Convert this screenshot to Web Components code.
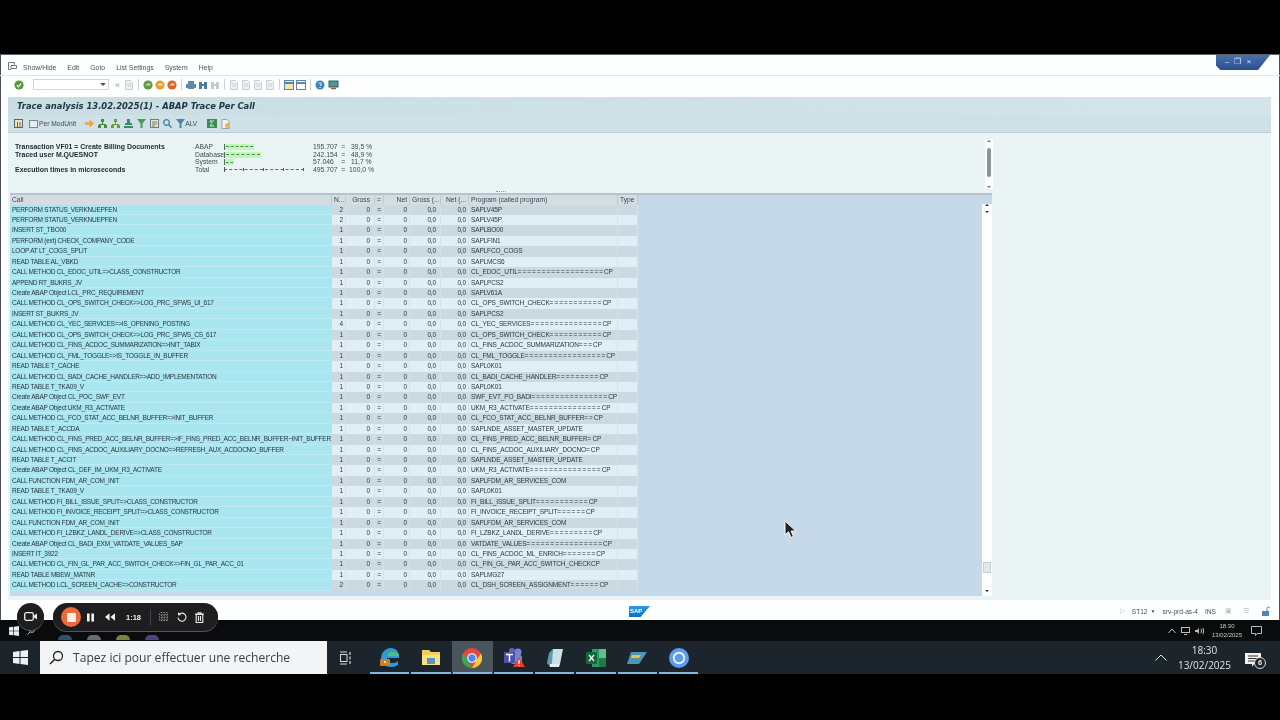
<!DOCTYPE html>
<html lang="fr">
<head>
<meta charset="utf-8">
<title>Trace analysis</title>
<style>
  html, body { margin: 0; height: 720px; overflow: hidden; background: #000; }
  body { display: flex; flex-direction: column; font-family: "Liberation Sans", sans-serif; position: relative; filter: blur(.3px); }
</style>
</head>
<body>
<sap-window>
  <sap-menubar></sap-menubar>
  <sap-toolbar></sap-toolbar>
  <sap-panel>
    <trace-header></trace-header>
    <trace-table></trace-table>
  </sap-panel>
  <sap-status></sap-status>
</sap-window>
<win-strip></win-strip>
<win-taskbar></win-taskbar>
<rec-bar></rec-bar>
<mouse-cursor></mouse-cursor>

<script>
const define = (name, html) => {
  customElements.define(name, class extends HTMLElement {
    constructor() {
      super()
      this.attachShadow({ mode: 'open' })
      this.shadowRoot.innerHTML = typeof html === 'function' ? html() : html
    }
  })
}

const sep = (x) => `<i style="width:1px;height:11px;background:#c9d2d6;margin:0 ${x}px 0 ${x - 2}px"></i>`

const ball = (c) => `<svg width="10" height="10" viewBox="0 0 10 10"><circle cx="5" cy="5" r="4.6" fill="${c}"/><path d="M2.6 5.4 4 3.6h3.4v1.8H4.6z" fill="#fff" opacity=".65"/></svg>`

const page = (c = '#c6d0d4') => `<svg width="10" height="10" viewBox="0 0 10 10"><path d="M1.500 .5h5l2 2v7h-7z" fill="#eef2f3" stroke="${c}"/><path d="M3 4h4M3 6h4" stroke="${c}"/></svg>`

define('sap-window', `
  <style>
    :host { display: flex; flex-direction: column; height: 566px; margin-top: 54px; background: #fdfefe; border-top: 1px solid #5a6166; box-sizing: border-box; position: relative; box-shadow: inset 1px 0 0 #4a5055, inset -1px 0 0 #4a5055; }
    .ctl { position: absolute; top: 0; right: 10px; width: 54px; height: 15px; background: linear-gradient(#4a6fae, #2c4f8f); clip-path: polygon(0 0, 100% 0, 78% 100%, 8% 100%, 0 70%); color: #dfe8f4; font: 8px/13px "Liberation Sans", sans-serif; display: flex; gap: 5px; padding-left: 9px; box-sizing: border-box; }
  </style>
  <slot></slot>
  <div class="ctl"><span>–</span><span>❐</span><span>×</span></div>
`)

define('sap-menubar', `
  <style>
    :host { display: flex; align-items: center; height: 21px; padding: 5px 0 0 8px; box-sizing: border-box; border-bottom: 1px solid #dfe7ea; color: #46545d; font: 6.900px "Liberation Sans", sans-serif; }
    span { margin-right: 11px; }
    svg { margin-right: 6px; margin-top: -3px; }
  </style>
  <svg width="9" height="9" viewBox="0 0 9 9"><path d="M.5 7.500v-7h6v2M3 3.500h5.500v3H3zM.5 7.500H3" fill="none" stroke="#6d7b84"/></svg>
  <span>Show/Hide</span><span>Edit</span><span>Goto</span><span>List Settings</span><span>System</span><span>Help</span>
`)

define('sap-toolbar', () => `
  <style>
    :host { display: flex; align-items: center; height: 17px; padding-left: 14px; box-sizing: border-box; }
    .cmd { width: 76px; height: 11px; border: 1px solid #cfd8dc; background: #fff; margin: 0 6px 0 7px; position: relative; box-sizing: border-box; }
    .cmd::after { content: ""; position: absolute; right: 2px; top: 3px; border: 3px solid transparent; border-top-color: #555; }
    .g { color: #8d999f; font: 9px "Liberation Sans", sans-serif; margin-right: 4px; }
    svg { margin-right: 2px; flex: none; }
    i { flex: none; }
  </style>
  <svg width="10" height="10" viewBox="0 0 10 10"><circle cx="5" cy="5" r="4.600" fill="#4f9a3a"/><path d="M2.800 5 4.400 6.800 7.200 3.400" fill="none" stroke="#fff" stroke-width="1.200"/></svg>
  <div class="cmd"></div>
  <span class="g">«</span>
  ${page()}${sep(4)}
  ${ball('#5f9c3c')}${ball('#e2a32d')}${ball('#d7662a')}${sep(4)}
  <svg width="10" height="10" viewBox="0 0 10 10"><path d="M2 1h6v3H2zM0 4h10v4H0zM2 7h6v2H2z" fill="#5d8aa8"/></svg>
  <svg width="10" height="10" viewBox="0 0 10 10"><path d="M1 2h3v7H1zM6 2h3v7H6zM4 4h2v2H4z" fill="#4b7da0"/></svg>
  <svg width="10" height="10" viewBox="0 0 10 10"><path d="M1 2h3v7H1zM6 2h3v7H6zM4 4h2v2H4z" fill="#c3ccd0"/></svg>
  ${sep(4)}${page()}${page()}${page()}${page()}${sep(4)}
  <svg width="10" height="10" viewBox="0 0 10 10"><rect x=".5" y=".5" width="9" height="9" fill="#f6e3b0" stroke="#5b86a8"/><path d="M1 3h8" stroke="#5b86a8" stroke-width="2"/></svg>
  <svg width="10" height="10" viewBox="0 0 10 10"><rect x=".5" y=".5" width="9" height="9" fill="#fff" stroke="#5b86a8"/><path d="M1 3h8" stroke="#5b86a8" stroke-width="2"/></svg>
  ${sep(4)}
  <svg width="10" height="10" viewBox="0 0 10 10" style="margin-right:3px"><circle cx="5" cy="5" r="4.500" fill="#3f86bd"/><path d="M3.800 3.600a1.300 1.200 0 1 1 1.600 1.500V6M5 7v1" stroke="#fff" fill="none"/></svg>
  <svg width="11" height="10" viewBox="0 0 11 10"><rect x="1" y="1" width="9" height="6" fill="#4a9a86" stroke="#2f5f80"/><path d="M3 8.500h5" stroke="#c44b37" stroke-width="1.500"/></svg>
`)

define('sap-panel', `
  <style>
    :host { display: block; flex: 1; min-height: 0; margin: 4px 9px 0 8px; background: #ebf4f4; }
    .title { height: 18px; background: linear-gradient(90deg, #c9dde3, #d3e4ea); padding-left: 9px; font: italic bold 8.400px/18px "DejaVu Sans", sans-serif; color: #233640; }
    .tools { height: 18px; background: #cfe0e6; border-bottom: 1px solid #bccdd4; display: flex; align-items: center; padding-left: 6px; font: 6.700px "Liberation Sans", sans-serif; color: #3e4c54; box-sizing: border-box; }
    .tools svg { margin-right: 4px; flex: none; }
    .tools span { margin-right: 10px; }
    .body { padding: 6px 0 0 2px; }
  </style>
  <div class="title">Trace analysis 13.02.2025(1) - ABAP Trace Per Call</div>
  <div class="tools">
    <svg width="9" height="9" viewBox="0 0 9 9"><rect x=".5" y=".5" width="8" height="8" fill="#f2e3b4" stroke="#58666d"/><path d="M3.500 3v5M6 3v5" stroke="#58666d"/></svg>
    <svg width="9" height="8" viewBox="0 0 9 8" style="margin:0 1px 0 2px"><rect x=".5" y=".5" width="8" height="7" fill="#e4edf0" stroke="#78868d"/></svg>
    <span style="margin-right:9px">Per ModUnit</span>
    <svg width="9" height="9" viewBox="0 0 10 9"><path d="M0 3h5V0l5 4.500L5 9V6H0z" fill="#e8a63c"/></svg>
    <svg width="9" height="9" viewBox="0 0 9 9"><path d="M3 0h3v3H3zM0 6h3v3H0zM6 6h3v3H6zM1 5h7v1H1zM4 3h1v2H4z" fill="#4f8a3c"/></svg>
    <svg width="9" height="9" viewBox="0 0 9 9"><path d="M3 0h3v3H3zM0 6h3v3H0zM6 6h3v3H6zM1 5h7v1H1zM4 3h1v2H4z" fill="#6c9a3d"/></svg>
    <svg width="9" height="9" viewBox="0 0 9 9"><path d="M3 0h3v4h2v2H1V4h2zM0 7h9v2H0z" fill="#3c8b6d"/></svg>
    <svg width="9" height="9" viewBox="0 0 9 9"><path d="M0 0h9L5.500 4.500V9h-2V4.500z" fill="#4b9a55"/></svg>
    <svg width="9" height="9" viewBox="0 0 9 9"><rect x=".5" y=".5" width="8" height="8" fill="#f2e3b4" stroke="#66808c"/><path d="M2 3h5M2 5h5M2 7h3" stroke="#66808c"/></svg>
    <svg width="9" height="9" viewBox="0 0 9 9"><circle cx="3.500" cy="3.500" r="2.800" fill="none" stroke="#3f7fa8" stroke-width="1.200"/><path d="m5.500 5.500 3 3" stroke="#3f7fa8" stroke-width="1.500"/></svg>
    <svg width="9" height="9" viewBox="0 0 9 9" style="margin-right:0"><path d="M0 0h9L5.500 4.500V9h-2V4.500z" fill="#4a83b0"/></svg>
    <span style="margin-right:10px">ALV</span>
    <svg width="10" height="9" viewBox="0 0 10 9"><rect width="10" height="9" fill="#3e8a55"/><path d="M3 2h4M3 2l2 2.500L3 7h4" stroke="#d6ecd8" fill="none"/></svg>
    <svg width="10" height="10" viewBox="0 0 10 10"><path d="M1 .5h5l2 2v7H1z" fill="#f4f4ee" stroke="#98a4a8"/><circle cx="6.500" cy="6.500" r="2.500" fill="#e8b54a"/></svg>
  </div>
  <div class="body"><slot></slot></div>
`)

define('trace-header', `
  <style>
    :host { display: grid; grid-template-columns: 180px 29px 89px 1fr 8px; height: 50px; padding: 4px 0 0 5px; width: 983px; box-sizing: border-box; font: 6.800px/7.700px "Liberation Sans", sans-serif; color: #3d4a52; position: relative; }
    .l { font-weight: bold; color: #222c33; font-size: 6.950px; }
    .blank { height: 7.700px; }
    .b { height: 7.700px; display: flex; align-items: center; }
    .b u { display: block; height: 6px; background: #bff7b8; border-left: 1px solid #5a6b60; position: relative; }
    .b u::after { content: ""; position: absolute; left: 1px; right: 1px; top: 2.500px; border-top: 1px dashed #4a8a52; }
    .t { width: 80px; height: 1px; border-top: 1px dashed #666; position: relative; }
    .t::before { content: ""; position: absolute; left: 0; top: -3px; height: 5px; border-left: 1px solid #555; }
    .t i { position: absolute; top: -2px; height: 3px; border-left: 1px solid #555; }
    pre { margin: 0; font: inherit; }
    .bar { position: absolute; right: 0; top: 0; width: 8px; height: 50px; background: #fbfdfd; }
    .bar b { position: absolute; left: 2px; top: 9px; width: 4px; height: 29px; background: #8b9499; border-radius: 2px; }
    .bar i { position: absolute; left: 1.500px; border: 2.500px solid transparent; }
    .grip { position: absolute; left: 486px; bottom: -3px; width: 10px; border-top: 1px dotted #8b9aa2; }
  </style>
  <div class="l">Transaction VF01 = Create Billing Documents<br>Traced user M.QUESNOT<div class="blank"></div>Execution times in microseconds</div>
  <div>ABAP<br>Database<br>System<br>Total</div>
  <div>
    <div class="b"><u style="width:29px"></u></div>
    <div class="b"><u style="width:36px"></u></div>
    <div class="b"><u style="width:9px"></u></div>
    <div class="b"><div class="t"><i style="left:19px"></i><i style="left:39px"></i><i style="left:59px"></i><i style="left:79px"></i></div></div>
  </div>
  <pre>195.707  =   39,5 %
242.154  =   48,9 %
57.046    =   11,7 %
495.707  =  100,0 %</pre>
  <div class="bar"><i style="top:-1px;border-bottom-color:#777"></i><b></b><i style="bottom:-1px;border-top-color:#777"></i></div>
  <div class="grip"></div>
`)

const ROWS = [
  ['PERFORM STATUS_VERKNUEPFEN', 2, 'SAPLV45P'],
  ['PERFORM STATUS_VERKNUEPFEN', 2, 'SAPLV45P'],
  ['INSERT ST_TBO00', 1, 'SAPLBO00'],
  ['PERFORM (ext) CHECK_COMPANY_CODE', 1, 'SAPLFIN1'],
  ['LOOP AT LT_COGS_SPLIT', 1, 'SAPLFCO_COGS'],
  ['READ TABLE AL_VBKD', 1, 'SAPLMCS6'],
  ['CALL METHOD CL_EDOC_UTIL=>CLASS_CONSTRUCTOR', 1, 'CL_EDOC_UTIL==================CP'],
  ['APPEND RT_BUKRS_JV', 1, 'SAPLPCS2'],
  ['Create ABAP Object LCL_PRC_REQUIREMENT', 1, 'SAPLV61A'],
  ['CALL METHOD CL_OPS_SWITCH_CHECK=>LOG_PRC_SFWS_UI_617', 1, 'CL_OPS_SWITCH_CHECK===========CP'],
  ['INSERT ST_BUKRS_JV', 1, 'SAPLPCS2'],
  ['CALL METHOD CL_YEC_SERVICES=>IS_OPENING_POSTING', 4, 'CL_YEC_SERVICES===============CP'],
  ['CALL METHOD CL_OPS_SWITCH_CHECK=>LOG_PRC_SFWS_CS_617', 1, 'CL_OPS_SWITCH_CHECK===========CP'],
  ['CALL METHOD CL_FINS_ACDOC_SUMMARIZATION=>INIT_TABIX', 1, 'CL_FINS_ACDOC_SUMMARIZATION===CP'],
  ['CALL METHOD CL_FML_TOGGLE=>IS_TOGGLE_IN_BUFFER', 1, 'CL_FML_TOGGLE=================CP'],
  ['READ TABLE T_CACHE', 1, 'SAPL0K01'],
  ['CALL METHOD CL_BADI_CACHE_HANDLER=>ADD_IMPLEMENTATION', 1, 'CL_BADI_CACHE_HANDLER=========CP'],
  ['READ TABLE T_TKA09_V', 1, 'SAPL0K01'],
  ['Create ABAP Object CL_POC_SWF_EVT', 1, 'SWF_EVT_PO_BADI================CP'],
  ['Create ABAP Object UKM_R3_ACTIVATE', 1, 'UKM_R3_ACTIVATE===============CP'],
  ['CALL METHOD CL_FCO_STAT_ACC_BELNR_BUFFER=>INIT_BUFFER', 1, 'CL_FCO_STAT_ACC_BELNR_BUFFER==CP'],
  ['READ TABLE T_ACCDA', 1, 'SAPLNDE_ASSET_MASTER_UPDATE'],
  ['CALL METHOD CL_FINS_PRED_ACC_BELNR_BUFFER=>IF_FINS_PRED_ACC_BELNR_BUFFER~INIT_BUFFER', 1, 'CL_FINS_PRED_ACC_BELNR_BUFFER=CP'],
  ['CALL METHOD CL_FINS_ACDOC_AUXILIARY_DOCNO=>REFRESH_AUX_ACDOCNO_BUFFER', 1, 'CL_FINS_ACDOC_AUXILIARY_DOCNO=CP'],
  ['READ TABLE T_ACCIT', 1, 'SAPLNDE_ASSET_MASTER_UPDATE'],
  ['Create ABAP Object CL_DEF_IM_UKM_R3_ACTIVATE', 1, 'UKM_R3_ACTIVATE===============CP'],
  ['CALL FUNCTION FDM_AR_COM_INIT', 1, 'SAPLFDM_AR_SERVICES_COM'],
  ['READ TABLE T_TKA09_V', 1, 'SAPL0K01'],
  ['CALL METHOD FI_BILL_ISSUE_SPLIT=>CLASS_CONSTRUCTOR', 1, 'FI_BILL_ISSUE_SPLIT===========CP'],
  ['CALL METHOD FI_INVOICE_RECEIPT_SPLIT=>CLASS_CONSTRUCTOR', 1, 'FI_INVOICE_RECEIPT_SPLIT======CP'],
  ['CALL FUNCTION FDM_AR_COM_INIT', 1, 'SAPLFDM_AR_SERVICES_COM'],
  ['CALL METHOD FI_LZBKZ_LANDL_DERIVE=>CLASS_CONSTRUCTOR', 1, 'FI_LZBKZ_LANDL_DERIVE=========CP'],
  ['Create ABAP Object CL_BADI_EXM_VATDATE_VALUES_SAP', 1, 'VATDATE_VALUES================CP'],
  ['INSERT IT_3922', 1, 'CL_FINS_ACDOC_ML_ENRICH=======CP'],
  ['CALL METHOD CL_FIN_GL_PAR_ACC_SWITCH_CHECK=>FIN_GL_PAR_ACC_01', 1, 'CL_FIN_GL_PAR_ACC_SWITCH_CHECKCP'],
  ['READ TABLE MBEW_MATNR', 1, 'SAPLMG27'],
  ['CALL METHOD LCL_SCREEN_CACHE=>CONSTRUCTOR', 2, 'CL_DSH_SCREEN_ASSIGNMENT======CP'],
]

const esc = (s) => s.replace(/&/g, '&amp;').replace(/</g, '&lt;').replace(/>/g, '&gt;')
// the "=" padding runs are wider in the SAP font than in ours
const pad = (s) => esc(s).replace(/=+/g, (m) => `<span class="eq">${m}</span>`)

define('trace-table', () => `
  <style>
    :host { display: block; width: 982px; height: 403px; margin-top: 4px; background: #c5d9e8; border-top: 2px solid #b3c4cf; box-sizing: border-box; font: 6.500px/10.440px "Liberation Sans", sans-serif; letter-spacing: -.14px; color: #2a3740; position: relative; }
    .grid { display: grid; grid-template-columns: 322px 14px 29px 9px 26px 31px 28px 149px 20px; grid-template-rows: 9.500px; grid-auto-rows: 10.440px; width: max-content; }
    .grid > div { overflow: hidden; white-space: nowrap; padding: 0 2px; box-sizing: border-box; border-right: 1px solid #d5e2ea; }
    .grid > .hd { background: #d3dde2; color: #3b474e; font-size: 6.700px; line-height: 9.500px; letter-spacing: 0; border-right-color: #bfcbd2; }
    .grid > .lim { padding: 0 4px 0 2px; }
    .r { text-align: right; }
    .c { text-align: center; }
    .call { background: #a9e6ef; }
    .o { background: #cdd9e2; }
    .e { background: #e1eef6; }
    .grid > .call { border-bottom: 1px solid #bdeaf0; border-right: 0; padding-right: 0; letter-spacing: -.25px; }
    .eq { letter-spacing: 1px; }
    .sb { position: absolute; right: 0; top: 9px; width: 10px; height: 392px; background: #fbfdfe; }
    .sb i { position: absolute; left: 2.500px; border: 2.500px solid transparent; }
    .sb b { position: absolute; left: 1px; top: 358px; width: 8px; height: 11px; background: #dfe9ee; border: 1px solid #c3d0d6; box-sizing: border-box; }
  </style>
  <div class="grid">
    <div class="hd">Call</div><div class="hd">N...</div><div class="hd r lim">Gross</div><div class="hd c">=</div><div class="hd r">Net</div><div class="hd r">Gross (...</div><div class="hd r">Net (...</div><div class="hd">Program (called program)</div><div class="hd">Type</div>
    ${ROWS.map(([call, n, prog], i) => {
      const k = i % 2 ? 'e' : 'o'
      return `<div class="call">${esc(call)}</div><div class="${k} r">${n}</div><div class="${k} r lim">0</div><div class="${k} c">=</div><div class="${k} r">0</div><div class="${k} r lim">0,0</div><div class="${k} r">0,0</div><div class="${k}">${pad(prog)}</div><div class="${k}"></div>`
    }).join('')}
  </div>
  <div class="sb">
    <i style="top:-2px;border-bottom-color:#333"></i>
    <i style="top:7px;border-top-color:#333"></i>
    <b></b>
    <i style="bottom:2px;border-top-color:#333"></i>
  </div>
`)

define('sap-status', `
  <style>
    :host { display: flex; align-items: center; justify-content: flex-end; height: 20px; padding: 2px 10px 0 0; box-sizing: border-box; font: 6.600px "Liberation Sans", sans-serif; color: #46535b; position: relative; }
    .logo { position: absolute; left: 629px; top: 6px; width: 21px; height: 11px; background: linear-gradient(#2a9be0, #0a6fc0); clip-path: polygon(0 0, 100% 0, 55% 100%, 0 100%); color: #fff; font: bold 6px/11px "Liberation Sans", sans-serif; padding-left: 1px; box-sizing: border-box; }
    span { margin-left: 7px; }
    .m { color: #b8c2c8; }
  </style>
  <div class="logo">SAP</div>
  <span class="m">▷</span><span>ST12</span><span style="font-size:5px;margin-left:3px">▼</span><span>srv-prd-as-4</span><span>INS</span>
  <span class="m" style="margin-left:9px">▣</span><span class="m" style="margin-left:11px">☰</span>
  <svg width="9" height="10" viewBox="0 0 9 10" style="margin-left:12px"><path d="M1 5h7v5H1z" fill="#4a88b5"/><path d="M6 5V2.500a1.500 1.500 0 0 1 3 0" fill="none" stroke="#4a88b5"/></svg>
`)

define('win-strip', `
  <style>
    :host { display: flex; align-items: center; height: 21px; background: #0a0b0c; color: #ccc; font: 6px "Liberation Sans", sans-serif; padding-left: 9px; box-sizing: border-box; flex: none; position: relative; }
    .right { margin-left: auto; display: flex; align-items: center; padding-right: 13px; }
    .right svg { margin-right: 5px; }
    .d { text-align: center; line-height: 9px; margin: 0 9px 0 3px; }
    .ghost { position: absolute; left: 0; right: 0; bottom: 1px; display: flex; padding-left: 58px; gap: 15px; opacity: .7; }
    .ghost i { width: 14px; height: 5px; border-radius: 5px 5px 0 0; }
  </style>
  <svg width="10" height="10" viewBox="0 0 11 11"><path d="M0 1.500 4.800.8v4.300H0zM5.500.7 11 0v5.100H5.500zM0 5.800h4.800v4.400L0 9.500zM5.500 5.800H11V11l-5.500-.8z" fill="#e7edf2"/></svg>
  <svg width="8" height="8" viewBox="0 0 8 8" style="margin-left:8px"><circle cx="5" cy="3" r="2.400" fill="none" stroke="#bbb"/><path d="M3 5 .8 7.500" stroke="#bbb"/></svg>
  <div class="ghost"><i style="background:#3d6f9c"></i><i style="background:#8d9aa0"></i><i style="background:#b3b25a"></i><i style="background:#6a5ca8"></i></div>
  <div class="right">
    <svg width="8" height="6" viewBox="0 0 8 6"><path d="m.5 5 3.500-4 3.500 4" fill="none" stroke="#bbb"/></svg>
    <svg width="9" height="8" viewBox="0 0 9 8"><rect x=".5" y=".5" width="8" height="5" fill="none" stroke="#bbb"/><path d="M3 7.500h3" stroke="#bbb"/></svg>
    <svg width="9" height="8" viewBox="0 0 9 8"><path d="M0 3h2l2-2v6L2 5H0z" fill="#bbb"/><path d="M6 2q1 2 0 4M8 1q1.200 3 0 6" fill="none" stroke="#bbb"/></svg>
    <div class="d">18:30<br>13/02/2025</div>
    <svg width="11" height="10" viewBox="0 0 11 10"><path d="M.5.5h10v7H6L4.500 9.500V7.500h-4z" fill="none" stroke="#bbb"/></svg>
  </div>
`)

const tab = (inner, cls = '') => `<div class="tab ${cls}">${inner}</div>`

define('win-taskbar', () => `
  <style>
    :host { display: flex; align-items: stretch; height: 33px; background: #1c252b; color: #e4e8ea; flex: none; font-family: "Open Sans", "Liberation Sans", sans-serif; position: relative; }
    .start { width: 40px; display: flex; align-items: center; justify-content: center; }
    .search { width: 287px; background: #f3f4f5; display: flex; align-items: center; color: #3a3f44; font-size: 12.100px; padding-left: 9px; gap: 9px; box-sizing: border-box; }
    .tv { width: 38px; display: flex; align-items: center; justify-content: center; }
    .tabs { display: flex; margin-left: 4px; }
    .tab { width: 41.300px; display: flex; align-items: center; justify-content: center; position: relative; }
    .tab.on::after { content: ""; position: absolute; left: 1px; right: 1px; bottom: 0; height: 2px; background: #7fb7e0; }
    .tab.act { background: #4a545c; }
    .tray { margin-left: auto; display: flex; align-items: center; }
    .clock { text-align: center; font-size: 10px; line-height: 15px; margin: 0 14px 0 11px; color: #dfe4e6; }
    .note { position: relative; width: 16px; height: 16px; margin-right: 19px; }
    .note b { position: absolute; right: -5px; bottom: -3px; width: 12px; height: 12px; border-radius: 50%; background: #1c252b; border: 1px solid #ddd; box-sizing: border-box; font: bold 7.500px/10px "Liberation Sans", sans-serif; text-align: center; }
  </style>
  <div class="start"><svg width="15" height="15" viewBox="0 0 15 15"><path d="M0 2.100 6.500 1.100v5.900H0zM7.500 1 15 0v7H7.500zM0 8h6.500v5.900L0 12.900zM7.500 8H15v7l-7.500-1z" fill="#eef2f5"/></svg></div>
  <div class="search">
    <svg width="15" height="15" viewBox="0 0 15 15"><circle cx="9" cy="6" r="4.500" fill="none" stroke="#222" stroke-width="1.300"/><path d="M5.800 9.200 1 14" stroke="#222" stroke-width="1.500"/></svg>
    <span>Tapez ici pour effectuer une recherche</span>
  </div>
  <div class="tv"><svg width="14" height="14" viewBox="0 0 14 14"><path d="M1 1h7M1 13h7" stroke="#d5dadd"/><rect x="1.500" y="3.500" width="6.500" height="7" fill="none" stroke="#d5dadd"/><path d="M11 1v3M11 5.500v3M11 10v3" stroke="#d5dadd" stroke-width="1.200"/></svg></div>
  <div class="tabs">
    ${tab(`<svg width="21" height="21" viewBox="0 0 21 21"><path d="M2 12C2 5 7 1 12 1c5 0 8 4 8 8v2H8c0 3 3 5 6 5 2 0 4-1 5-2v4c-2 1-4 2-7 2-6 0-10-4-10-8z" fill="#2d9ad6"/><path d="M20 9H9c0-3 2-4 4-4 3 0 7 1 7 4z" fill="#55c26b"/><rect x="1" y="12" width="10" height="7" rx="1" fill="#c97f2c"/><rect x="5" y="14" width="2" height="2" fill="#f4dba0"/></svg>`, 'on')}
    ${tab(`<svg width="20" height="17" viewBox="0 0 20 17"><path d="M1 1h7l2 2h9v13H1z" fill="#f3ce5f"/><path d="M1 6h18v10H1z" fill="#f8e08a"/><rect x="6" y="9" width="8" height="6" fill="#5c94c0"/></svg>`, 'on')}
    ${tab(`<svg width="20" height="20" viewBox="0 0 20 20"><circle cx="10" cy="10" r="10" fill="#e2483b"/><path d="M10 20a10 10 0 0 1-8.700-15L6 13l4 7z" fill="#3aa757"/><path d="M19 5.500a10 10 0 0 1-9 14.500l4.500-8z" fill="#fbcb37"/><circle cx="10" cy="10" r="4.800" fill="#fff"/><circle cx="10" cy="10" r="3.700" fill="#4a8af0"/></svg>`, 'on act')}
    ${tab(`<svg width="22" height="21" viewBox="0 0 22 21"><circle cx="15" cy="5" r="3.500" fill="#7b83d8"/><circle cx="9" cy="4" r="3" fill="#5b63bd"/><rect x="8" y="8" width="11" height="9" rx="2" fill="#7b83d8"/><rect x="1" y="5" width="11" height="11" fill="#4b53a8"/><path d="M3 7.500h7M6.500 7.500v7" stroke="#fff" stroke-width="1.500"/><path d="m16 10 6 10H10z" fill="#e4412b"/><path d="M16 13v4M16 18v1" stroke="#fff" stroke-width="1.200"/></svg>`, 'on')}
    ${tab(`<svg width="18" height="20" viewBox="0 0 18 20"><path d="M7 1h10l-3 15H4z" fill="#c8e2ea"/><path d="M7 1 3 5 1 15l3 4 2-4z" fill="#5f9bb0"/><path d="M4 19h9l1-3H4z" fill="#e7f1f4"/></svg>`, 'on')}
    ${tab(`<svg width="20" height="18" viewBox="0 0 20 18"><rect x="6" y="0" width="14" height="18" fill="#2e9a5e"/><path d="M13 0h7v9h-7z" fill="#5cc088"/><path d="M13 9h7v9h-7z" fill="#1f7a48"/><rect x="0" y="3" width="11" height="12" fill="#14683a"/><path d="m3 6 5 6M8 6l-5 6" stroke="#fff" stroke-width="1.200"/></svg>`, 'on')}
    ${tab(`<svg width="20" height="12" viewBox="0 0 20 12"><path d="M4 0h16l-8 12H0z" fill="#4f94b4"/><path d="M5 3h9l-2 3H4z" fill="#f2c23e"/></svg>`, 'on')}
    ${tab(`<svg width="20" height="20" viewBox="0 0 20 20"><circle cx="10" cy="10" r="10" fill="#5c9bf0"/><circle cx="10" cy="10" r="6.200" fill="#eaf2ff"/><circle cx="10" cy="10" r="4.300" fill="#5c9bf0"/></svg>`, 'on')}
  </div>
  <div class="tray">
    <svg width="12" height="7" viewBox="0 0 12 7"><path d="m.5 6.500 5.500-5.500 5.500 5.500" fill="none" stroke="#dfe4e6"/></svg>
    <div class="clock">18:30<br>13/02/2025</div>
    <div class="note"><svg width="16" height="14" viewBox="0 0 16 14"><path d="M0 0h16v11H9l-2 3v-3H0z" fill="#f0f2f3"/><path d="M3 3h10M3 5.500h10M3 8h7" stroke="#333"/></svg><b>6</b></div>
  </div>
`)

define('rec-bar', `
  <style>
    :host { position: absolute; left: 17px; top: 603px; display: flex; gap: 9px; color: #eee; font: bold 7.500px "Liberation Sans", sans-serif; }
    .cam, .bar { background: #1e1e20; height: 28px; border-radius: 14px; display: flex; align-items: center; box-shadow: 0 1px 0 #555; }
    .cam { width: 27px; justify-content: center; height: 27px; }
    .bar { width: 165px; padding-left: 8px; box-sizing: border-box; }
    .stop { width: 20px; height: 20px; border-radius: 50%; background: #ec6a3c; display: flex; align-items: center; justify-content: center; margin-right: 6px; }
    .stop::after { content: ""; width: 9px; height: 9px; background: #fbeee8; border-radius: 1px; }
    svg { flex: none; }
  </style>
  <div class="cam"><svg width="13" height="9" viewBox="0 0 13 9"><rect x=".7" y=".7" width="8.600" height="7.600" rx="1.500" fill="none" stroke="#eee" stroke-width="1.300"/><path d="m10 3.500 3-2v6l-3-2z" fill="#eee"/></svg></div>
  <div class="bar">
    <div class="stop"></div>
    <svg width="7" height="9" viewBox="0 0 8 9" style="margin-right:11px"><path d="M0 0h3v9H0zM5 0h3v9H5z" fill="#f2f2f2"/></svg>
    <svg width="10" height="8" viewBox="0 0 11 8" style="margin-right:11px"><path d="M5 0v8L0 4zM11 0v8L6 4z" fill="#f2f2f2"/></svg>
    <span>1:18</span>
    <i style="width:1px;height:16px;background:#444;margin:0 8px 0 9px"></i>
    <svg width="10" height="10" viewBox="0 0 11 11" style="margin-right:8px"><path d="M0 2.500h11M0 5.500h11M0 8.500h11M2.500 0v11M5.500 0v11M8.500 0v11" stroke="#ddd" stroke-dasharray="1 2"/></svg>
    <svg width="10" height="10" viewBox="0 0 10 10" style="margin-right:8px"><path d="M2 2.500A4 4 0 1 1 1 5.500" fill="none" stroke="#eee" stroke-width="1.100"/><path d="M1 0v3.200h3.200z" fill="#eee"/></svg>
    <svg width="9" height="11" viewBox="0 0 9 11"><path d="M0 2h9M3 2V.7h3V2M1.200 2.500h6.600V10.500H1.200zM3.500 4v5M5.500 4v5" fill="none" stroke="#eee" stroke-width="1.100"/></svg>
  </div>
`)

define('mouse-cursor', `
  <style>
    :host { position: absolute; left: 784px; top: 520px; display: block; width: 13px; height: 19px; }
  </style>
  <svg width="13" height="19" viewBox="0 0 13 19"><path d="M1 1v14l3.500-3.300L7 17.500l2.500-1.100-2.400-5.400h4.700z" fill="#222" stroke="#fff"/></svg>
`)
</script>
</body>
</html>
